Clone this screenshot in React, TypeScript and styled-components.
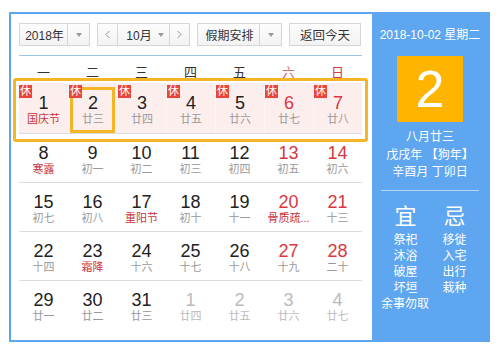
import React from 'react'
import styled, { createGlobalStyle } from 'styled-components'
import { ChevronLeft, ChevronRight } from 'lucide-react'

const GlobalStyle = createGlobalStyle`
    body {
        margin: 0;
        background: #fff;
        font-family: "Liberation Sans", "Noto Sans CJK SC", sans-serif;
    }
`

type Day = { n: number; l: string; red?: boolean; fest?: boolean; other?: boolean; rest?: boolean; sel?: boolean }

const weeks: Day[][] = [
    [
        { n: 1, l: '国庆节', fest: true, rest: true },
        { n: 2, l: '廿三', rest: true, sel: true },
        { n: 3, l: '廿四', rest: true },
        { n: 4, l: '廿五', rest: true },
        { n: 5, l: '廿六', rest: true },
        { n: 6, l: '廿七', red: true, rest: true },
        { n: 7, l: '廿八', red: true, rest: true },
    ],
    [
        { n: 8, l: '寒露', fest: true },
        { n: 9, l: '初一' },
        { n: 10, l: '初二' },
        { n: 11, l: '初三' },
        { n: 12, l: '初四' },
        { n: 13, l: '初五', red: true },
        { n: 14, l: '初六', red: true },
    ],
    [
        { n: 15, l: '初七' },
        { n: 16, l: '初八' },
        { n: 17, l: '重阳节', fest: true },
        { n: 18, l: '初十' },
        { n: 19, l: '十一' },
        { n: 20, l: '骨质疏...', red: true, fest: true },
        { n: 21, l: '十三', red: true },
    ],
    [
        { n: 22, l: '十四' },
        { n: 23, l: '霜降', fest: true },
        { n: 24, l: '十六' },
        { n: 25, l: '十七' },
        { n: 26, l: '十八' },
        { n: 27, l: '十九', red: true },
        { n: 28, l: '二十', red: true },
    ],
    [
        { n: 29, l: '廿一' },
        { n: 30, l: '廿二' },
        { n: 31, l: '廿三' },
        { n: 1, l: '廿四', other: true },
        { n: 2, l: '廿五', other: true },
        { n: 3, l: '廿六', other: true },
        { n: 4, l: '廿七', other: true },
    ],
]

const weekdays = ['一', '二', '三', '四', '五', '六', '日']

export default function App() {
    return (
        <>
            <GlobalStyle />
            <Frame>
                <Main>
                    <Toolbar>
                        <Select $w={71}>
                            <SelectText>2018年</SelectText>
                            <ArrowBox><Caret /></ArrowBox>
                        </Select>
                        <Select $w={93}>
                            <NavBtn><ChevronLeft size={13} strokeWidth={1.4} /></NavBtn>
                            <MonthText>10月<Caret /></MonthText>
                            <NavBtn $right><ChevronRight size={13} strokeWidth={1.4} /></NavBtn>
                        </Select>
                        <Select $w={85}>
                            <SelectText>假期安排</SelectText>
                            <ArrowBox><Caret /></ArrowBox>
                        </Select>
                        <TodayBtn>返回今天</TodayBtn>
                    </Toolbar>
                    <Divider />
                    <WeekHeader>
                        {weekdays.map((w, i) => (
                            <WeekName key={w} $tone={i === 5 ? 'sat' : i === 6 ? 'sun' : undefined}>{w}</WeekName>
                        ))}
                    </WeekHeader>
                    {weeks.map((week, wi) => (
                        <Week key={wi} $holiday={wi === 0} $last={wi === weeks.length - 1}>
                            {week.map((d, di) => (
                                <Cell key={di} $holiday={!!d.rest} $sel={!!d.sel}>
                                    {d.rest && <Badge>休</Badge>}
                                    <Num $red={!!d.red} $other={!!d.other} $holiday={!!d.rest}>{d.n}</Num>
                                    <Lunar $fest={!!d.fest} $other={!!d.other}>{d.l}</Lunar>
                                </Cell>
                            ))}
                        </Week>
                    ))}
                </Main>
                <Side>
                    <DateLine>2018-10-02 星期二</DateLine>
                    <BigDay>2</BigDay>
                    <LunarInfo>
                        <div>八月廿三</div>
                        <div>戊戌年 【狗年】</div>
                        <div>辛酉月 丁卯日</div>
                    </LunarInfo>
                    <SideLine />
                    <Almanac>
                        <AlmanacCol>
                            <AlmanacHead>宜</AlmanacHead>
                            <div>祭祀</div>
                            <div>沐浴</div>
                            <div>破屋</div>
                            <div>坏垣</div>
                        </AlmanacCol>
                        <AlmanacCol>
                            <AlmanacHead>忌</AlmanacHead>
                            <div>移徙</div>
                            <div>入宅</div>
                            <div>出行</div>
                            <div>栽种</div>
                        </AlmanacCol>
                    </Almanac>
                    <Rest>余事勿取</Rest>
                </Side>
            </Frame>
        </>
    )
}

const Frame = styled.div`
    margin: 12px 0 0 9px;
    width: 481px;
    height: 330px;
    box-sizing: border-box;
    border: 2px solid #5ea6f0;
    display: flex;
`

const Main = styled.div`
    width: 361px;
    box-sizing: border-box;
    padding: 9px 10px 0 8px;
    background: #fff;
`

const Toolbar = styled.div`
    display: flex;
    gap: 7px;
    height: 23px;
`

const Select = styled.div<{ $w: number }>`
    width: ${p => p.$w}px;
    height: 23px;
    box-sizing: border-box;
    border: 1px solid #d6d6d6;
    background: linear-gradient(#fdfdfd, #f2f2f2);
    display: flex;
    align-items: stretch;
    font-size: 12px;
    color: #333;
`

const SelectText = styled.div`
    flex: 1;
    display: flex;
    align-items: center;
    justify-content: center;
    padding-left: 2px;
`

const ArrowBox = styled.div`
    width: 21px;
    border-left: 1px solid #d6d6d6;
    display: flex;
    align-items: center;
    justify-content: center;
`

const Caret = styled.span`
    display: inline-block;
    width: 0;
    height: 0;
    border-left: 3px solid transparent;
    border-right: 3px solid transparent;
    border-top: 4px solid #999;
    margin-left: 6px;
    ${ArrowBox} & {
        margin-left: 0;
    }
`

const NavBtn = styled.div<{ $right?: boolean }>`
    width: 19px;
    display: flex;
    align-items: center;
    justify-content: center;
    color: #777;
    border-${p => (p.$right ? 'left' : 'right')}: 1px solid #d6d6d6;
`

const MonthText = styled.div`
    flex: 1;
    display: flex;
    align-items: center;
    justify-content: center;
    padding-left: 3px;
`

const TodayBtn = styled.div`
    width: 72px;
    height: 23px;
    box-sizing: border-box;
    border: 1px solid #d6d6d6;
    background: linear-gradient(#fdfdfd, #f2f2f2);
    display: flex;
    align-items: center;
    justify-content: center;
    font-size: 12.5px;
    color: #333;
`

const Divider = styled.div`
    height: 1px;
    margin-top: 9px;
    background: #9cc3ea;
`

const WeekHeader = styled.div`
    display: grid;
    grid-template-columns: repeat(7, 49px);
    height: 27px;
    box-sizing: border-box;
    padding-top: 3px;
    align-items: center;
`

const WeekName = styled.div<{ $tone?: 'sat' | 'sun' }>`
    text-align: center;
    font-size: 13px;
    color: ${p => (p.$tone === 'sat' ? '#d26a6a' : p.$tone === 'sun' ? '#d8383e' : '#333')};
`

const Week = styled.div<{ $holiday: boolean; $last: boolean }>`
    position: relative;
    display: grid;
    grid-template-columns: repeat(7, 49px);
    height: ${p => (p.$holiday ? 51 : 49)}px;
    box-sizing: border-box;
    border-bottom: ${p => (p.$last ? 'none' : '1px solid #dcdcdc')};

    ${p => p.$holiday && `
        &::after {
            content: '';
            position: absolute;
            top: -5px;
            bottom: -9px;
            left: -6px;
            right: -6px;
            border: 3px solid #f6b526;
            border-radius: 3px;
            pointer-events: none;
        }
    `}
`

const Cell = styled.div<{ $holiday: boolean; $sel: boolean }>`
    position: relative;
    display: flex;
    flex-direction: column;
    align-items: center;
    background: ${p => (p.$holiday ? '#fdeeee' : 'transparent')};
    border-left: ${p => (p.$holiday ? '1px solid #fbf6f6' : 'none')};

    &:first-child {
        border-left: none;
    }

    ${p => p.$sel && `
        &::before {
            content: '';
            position: absolute;
            top: 4px;
            left: 1px;
            right: 2px;
            bottom: 0;
            border: 3px solid #f6b526;
        }
    `}
`

const Badge = styled.span`
    position: absolute;
    top: 2px;
    left: 0;
    z-index: 1;
    width: 13px;
    height: 13px;
    background: #e8453c;
    color: #fff;
    font-size: 11px;
    line-height: 13px;
    text-align: center;
`

const Num = styled.div<{ $red: boolean; $other: boolean; $holiday: boolean }>`
    margin-top: ${p => (p.$holiday ? 10 : 9)}px;
    font-size: 18px;
    line-height: 20px;
    color: ${p => (p.$other ? '#bbb' : p.$red ? '#d8383e' : '#222')};
`

const Lunar = styled.div<{ $fest: boolean; $other: boolean }>`
    font-size: 11px;
    line-height: 13px;
    white-space: nowrap;
    color: ${p => (p.$fest ? '#c8363b' : p.$other ? '#bbb' : '#999')};
`

const Side = styled.div`
    width: 116px;
    background: #5ea6f0;
    color: #fff;
    display: flex;
    flex-direction: column;
    align-items: stretch;
    padding: 0 9px;
    box-sizing: border-box;
`

const DateLine = styled.div`
    margin: 13px -9px 0;
    text-align: center;
    font-size: 12px;
    line-height: 16px;
    white-space: nowrap;
`

const BigDay = styled.div`
    align-self: center;
    margin-top: 13px;
    width: 66px;
    height: 66px;
    background: #ffb400;
    display: flex;
    align-items: center;
    justify-content: center;
    font-size: 52px;
    line-height: 1;
`

const LunarInfo = styled.div`
    margin: 7px -9px 0;
    text-align: center;
    font-size: 12px;
    line-height: 17.5px;
    white-space: nowrap;
`

const SideLine = styled.div`
    height: 1px;
    margin-top: 8px;
    background: rgba(255, 255, 255, 0.55);
`

const Almanac = styled.div`
    display: grid;
    grid-template-columns: 1fr 1fr;
    margin-top: 13px;
`

const AlmanacCol = styled.div`
    text-align: center;
    font-size: 12px;
    line-height: 16px;
`

const AlmanacHead = styled.div`
    font-size: 22px;
    line-height: 26px;
    margin-bottom: 2px;
`

const Rest = styled.div`
    font-size: 12px;
    line-height: 16px;
    white-space: nowrap;
`
